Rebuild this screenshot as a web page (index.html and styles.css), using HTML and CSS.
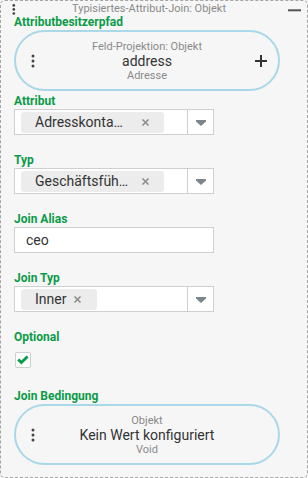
FILE: index.html
```html
<!DOCTYPE html>
<html lang="de">
<head>
<meta charset="utf-8">
<link rel="stylesheet" href="styles.css">
</head>
<body>
<div class="node">
  <div class="header">
    <svg class="hdr-dots" width="4" height="13" viewBox="0 0 4 13"><circle cx="1.8" cy="2.4" r="1.35"/><circle cx="1.8" cy="6.4" r="1.35"/><circle cx="1.8" cy="10.5" r="1.35"/></svg>
    <div class="title">Typisiertes-Attribut-Join: Objekt</div>
    <svg class="hdr-minus" width="13" height="12" viewBox="0 0 13 12"><rect x="0" y="6.3" width="13" height="2"/></svg>
  </div>
  <div class="body">
    <div class="label first">Attributbesitzerpfad</div>
    <div class="pill">
      <svg class="pill-dots" width="4" height="14" viewBox="0 0 4 14"><circle cx="2" cy="2" r="1.5"/><circle cx="2" cy="7" r="1.5"/><circle cx="2" cy="12" r="1.5"/></svg>
      <div class="pill-text">
        <div class="pill-sub">Feld-Projektion: Objekt</div>
        <div class="pill-main">address</div>
        <div class="pill-sub">Adresse</div>
      </div>
      <svg class="pill-plus" width="12" height="12" viewBox="0 0 12 12"><path d="M6 0V12M0 6H12"/></svg>
    </div>

    <div class="label">Attribut</div>
    <div class="select">
      <div class="select-main">
        <span class="chip"><span class="chip-text fixed">Adresskonta…</span><svg class="chip-x" width="7" height="7" viewBox="0 0 7 7"><path d="M0.5 0.5L6.5 6.5M6.5 0.5L0.5 6.5"/></svg></span>
      </div>
      <div class="select-arrow"><svg width="10" height="6" viewBox="0 0 10 6"><polygon points="0,0 10,0 10,1.5 5,6 0,1.5"/></svg></div>
    </div>

    <div class="label">Typ</div>
    <div class="select">
      <div class="select-main">
        <span class="chip"><span class="chip-text fixed">Geschäftsfüh…</span><svg class="chip-x" width="7" height="7" viewBox="0 0 7 7"><path d="M0.5 0.5L6.5 6.5M6.5 0.5L0.5 6.5"/></svg></span>
      </div>
      <div class="select-arrow"><svg width="10" height="6" viewBox="0 0 10 6"><polygon points="0,0 10,0 10,1.5 5,6 0,1.5"/></svg></div>
    </div>

    <div class="label">Join Alias</div>
    <div class="input">ceo</div>

    <div class="label">Join Typ</div>
    <div class="select">
      <div class="select-main">
        <span class="chip inner"><span class="chip-text">Inner</span><svg class="chip-x" width="7" height="7" viewBox="0 0 7 7"><path d="M0.5 0.5L6.5 6.5M6.5 0.5L0.5 6.5"/></svg></span>
      </div>
      <div class="select-arrow"><svg width="10" height="6" viewBox="0 0 10 6"><polygon points="0,0 10,0 10,1.5 5,6 0,1.5"/></svg></div>
    </div>

    <div class="label">Optional</div>
    <div class="checkbox"><svg width="14" height="14" viewBox="0 0 14 14"><polygon points="1.2,7.4 3.2,5.4 5.4,7.6 10.6,2.4 12.6,4.4 5.4,11.6"/></svg></div>

    <div class="label after-check">Join Bedingung</div>
    <div class="pill">
      <svg class="pill-dots" width="4" height="14" viewBox="0 0 4 14"><circle cx="2" cy="2" r="1.5"/><circle cx="2" cy="7" r="1.5"/><circle cx="2" cy="12" r="1.5"/></svg>
      <div class="pill-text">
        <div class="pill-sub">Objekt</div>
        <div class="pill-main">Kein Wert konfiguriert</div>
        <div class="pill-sub">Void</div>
      </div>
      <span></span>
    </div>
  </div>
</div>
</body>
</html>
```
FILE: styles.css
```css
html, body {
  margin: 0;
  padding: 0;
  background: #f6f6f6;
}
body {
  font-family: Roboto, "Liberation Sans", sans-serif;
}
.node {
  box-sizing: border-box;
  width: 308px;
  height: 478px;
  border: 1px dashed #a4a4a4;
  border-radius: 5px;
  background: #f6f6f6;
  display: flex;
  flex-direction: column;
}
.header {
  display: flex;
  align-items: flex-start;
  height: 12px;
  padding: 2px 6px 0 11px;
}
.hdr-dots {
  flex: none;
  fill: #444;
}
.title {
  flex: 1;
  text-align: center;
  font-size: 11px;
  line-height: 12px;
  color: #8a8a8a;
  padding-right: 6px;
  white-space: nowrap;
}
.hdr-minus {
  flex: none;
  fill: #555;
}
.body {
  display: flex;
  flex-direction: column;
  align-items: flex-start;
  padding-left: 13px;
}
.label {
  font-size: 12px;
  font-weight: bold;
  line-height: 14px;
  color: #0a9b48;
  margin-top: 18px;
}
.label.first {
  margin-top: 0;
}
.pill + .label {
  margin-top: 3px;
}
.label.after-check {
  margin-top: 21px;
}
.pill {
  margin-top: 1px;
  box-sizing: border-box;
  width: 266px;
  height: 61px;
  border: 2px solid #a9d8e8;
  border-radius: 31px;
  display: grid;
  grid-template-columns: 14px 1fr 14px;
  align-items: center;
  justify-items: center;
  padding: 0 10px;
}
.pill-dots {
  fill: #444;
}
.pill-text {
  text-align: center;
  white-space: nowrap;
}
.pill-sub {
  font-size: 11px;
  line-height: 13px;
  color: #8a8a8a;
}
.pill-main {
  font-size: 14px;
  line-height: 16px;
  color: #333;
}
.pill-plus {
  stroke: #333;
  stroke-width: 2;
  fill: none;
}
.select {
  margin-top: 1px;
  box-sizing: border-box;
  width: 200px;
  height: 26px;
  border: 1px solid #cfcfcf;
  background: #fff;
  display: flex;
}
.select-main {
  flex: 1;
  display: flex;
  align-items: center;
  padding-left: 6px;
}
.select-arrow {
  width: 25px;
  border-left: 1px solid #cfcfcf;
  display: flex;
  align-items: center;
  justify-content: center;
}
.select-arrow svg {
  fill: #7c858b;
  margin-top: 1px;
}
.chip {
  display: flex;
  align-items: center;
  gap: 7px;
  height: 21px;
  padding: 0 15px 0 14px;
  background: #ececec;
  border-radius: 3px;
  font-size: 14px;
  color: #333;
  white-space: nowrap;
}
.chip.inner {
  gap: 8px;
  padding-right: 16px;
}
.chip-text.fixed {
  width: 100px;
  overflow: hidden;
}
.chip-x {
  stroke: #8a8a8a;
  stroke-width: 1.5;
  fill: none;
}
.input {
  margin-top: 1px;
  box-sizing: border-box;
  width: 200px;
  height: 26px;
  border: 1px solid #cfcfcf;
  background: #fff;
  padding-left: 11px;
  display: flex;
  align-items: center;
  font-size: 14px;
  color: #333;
}
.checkbox {
  margin-top: 8px;
  margin-left: 1px;
  box-sizing: border-box;
  width: 16px;
  height: 16px;
  border: 1px solid #cfcfcf;
  border-radius: 2px;
  background: #fff;
  display: flex;
  align-items: center;
  justify-content: center;
}
.checkbox svg {
  fill: #0a9b48;
}
```
